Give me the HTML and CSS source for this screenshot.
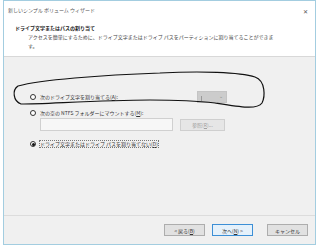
FILE: index.html
```html
<!DOCTYPE html>
<html lang="ja">
<head>
  <meta charset="UTF-8" />
  <title>新しいシンプル ボリューム ウィザード</title>
  <link rel="stylesheet" href="styles.css">
</head>
<body>
  <div class="window">
    <div class="header">
      <div class="titlebar">
        <span class="title">新しいシンプル ボリューム ウィザード</span>
        <span class="close">✕</span>
      </div>
      <div class="heading">ドライブ文字またはパスの割り当て</div>
      <div class="desc">アクセスを簡単にするために、ドライブ文字またはドライブ パスをパーティションに割り当てることができま<br>す。</div>
    </div>

    <div class="content">
      <div class="row row-letter">
        <div class="option"><span class="radio"></span>次のドライブ文字を割り当てる(<u>A</u>):</div>
        <div class="select"><span class="select-bar"></span><span class="select-arrow">⌄</span></div>
      </div>
      <div class="row">
        <div class="option"><span class="radio"></span>次の空の NTFS フォルダーにマウントする(<u>M</u>):</div>
      </div>
      <div class="row row-path">
        <div class="textbox"></div>
        <div class="btn btn-browse">参照(<u>R</u>)...</div>
      </div>
      <div class="row row-none">
        <div class="option"><span class="radio checked"></span><span class="focus">ドライブ文字またはドライブ パスを割り当てない(<u>D</u>)</span></div>
      </div>
    </div>

    <div class="footer">
      <div class="btn btn-back">&lt; 戻る(<u>B</u>)</div>
      <div class="btn btn-next">次へ(<u>N</u>) &gt;</div>
      <div class="btn btn-cancel">キャンセル</div>
    </div>
  </div>

  <!-- hand-drawn loop around the first option -->
  <svg class="scribble" width="320" height="249" viewBox="0 0 320 249">
    <path d="M160 73 C200 71 240 72 255 77 C266 81 265 97 262 103 C257 110 240 107 215 103 C190 100 175 100 150 100 C100 100 45 104 21 104 C13 101 12 90 18 86 C40 80 100 75 160 73"
          fill="none" stroke="#111" stroke-width="1.2" stroke-linecap="round" />
  </svg>
</body>
</html>
```

FILE: styles.css
```css
* {
  margin: 0;
  padding: 0;
  box-sizing: border-box;
}

body {
  background: #fff;
  font-family: "Noto Sans CJK JP", "Noto Sans", sans-serif;
  font-size: 5px;
  color: #333;
  width: 320px;
  height: 249px;
  overflow: hidden;
}

u {
  text-decoration: underline;
}

.window {
  margin-left: 3px;
  width: 313px;
  height: 245px;
  border: 1px solid #a3cde0;
  background: #f0f0f0;
  display: flex;
  flex-direction: column;
}

/* header */
.header {
  height: 56px;
  background: #fff;
  border-bottom: 1px solid #d8d8d8;
}

.titlebar {
  display: flex;
  justify-content: space-between;
  align-items: center;
  height: 6px;
  margin-top: 6px;
  padding: 0 7px 0 4px;
  line-height: 6px;
}

.title {
  color: #555;
}

.close {
  font-family: "DejaVu Sans", sans-serif;
  font-size: 6px;
  color: #555;
  margin-top: 3px;
}

.heading {
  margin: 12px 0 0 11px;
  line-height: 6px;
  font-weight: bold;
  color: #222;
}

.desc {
  margin: 1px 0 0 24px;
  width: 260px;
  line-height: 9px;
  color: #444;
}

/* options */
.content {
  height: 159px;
  border-bottom: 1px solid #dcdcdc;
  padding: 34px 88px 0 26px;
  display: flex;
  flex-direction: column;
}

.row {
  display: flex;
  align-items: center;
  height: 6px;
  margin-top: 7px;
  line-height: 6px;
}

.row-letter {
  height: 12px;
  margin-top: 0;
  justify-content: space-between;
}

.row-path {
  height: 13px;
  margin-top: 2px;
  padding-left: 10px;
  gap: 7px;
}

.row-none {
  margin-top: 10px;
}

.option {
  display: flex;
  align-items: center;
  white-space: nowrap;
}

.radio {
  width: 6px;
  height: 6px;
  border: 1px solid #333;
  border-radius: 50%;
  background: #fff;
  margin-right: 4px;
  display: flex;
  align-items: center;
  justify-content: center;
}

.radio.checked::after {
  content: "";
  width: 3px;
  height: 3px;
  border-radius: 50%;
  background: #111;
}

.focus {
  outline: 1px dotted #777;
  outline-offset: 0;
}

.select {
  width: 30px;
  height: 12px;
  background: #cccccc;
  border: 1px solid #c4c4c4;
  display: flex;
  align-items: center;
  justify-content: space-between;
  padding: 0 3px 0 3px;
}

.select-bar {
  width: 1px;
  height: 5px;
  background: #999;
  margin-top: 3px;
}

.select-arrow {
  color: #888;
  font-size: 5px;
  margin-top: -2px;
}

.textbox {
  width: 133px;
  height: 13px;
  border: 1px solid #d0d0d0;
  background: #f7f7f7;
}

/* buttons */
.btn {
  display: flex;
  align-items: center;
  justify-content: center;
  height: 12px;
  width: 41px;
  background: #e1e1e1;
  border: 1px solid #adadad;
  color: #333;
  white-space: nowrap;
}

.btn-browse {
  width: 45px;
  background: #e6e6e6;
  border-color: #cfcfcf;
  color: #a0a0a0;
}

.footer {
  flex: 1;
  display: flex;
  justify-content: flex-end;
  padding: 8px 7px 0 0;
}

.btn-next {
  margin-left: 7px;
  background: #e5f1fb;
  border-color: #3c8fd6;
}

.btn-cancel {
  margin-left: 14px;
}

.scribble {
  position: absolute;
  top: 0;
  left: 0;
  pointer-events: none;
}
```
